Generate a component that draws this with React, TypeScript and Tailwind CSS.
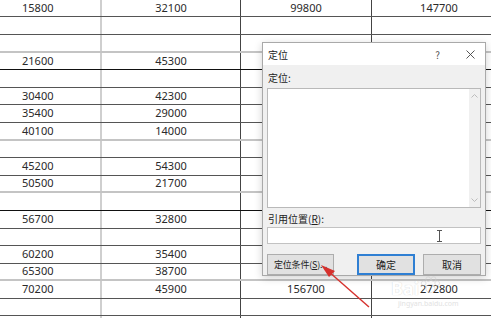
import React from 'react';

type Row = { h: string; line: string; cells: string[] };

const rows: Row[] = [
  { h: 'h-[17px]', line: 'border-b border-[#555]', cells: ['15800', '32100', '99800', '147700'] },
  { h: 'h-[18px]', line: 'border-b border-[#555]', cells: [] },
  { h: 'h-[18px]', line: 'border-b-2 border-[#c4c4c4]', cells: [] },
  { h: 'h-[17px]', line: 'border-b border-[#111]', cells: ['21600', '45300'] },
  { h: 'h-[18px]', line: 'border-b border-[#555]', cells: [] },
  { h: 'h-[17px]', line: 'border-b border-[#555]', cells: ['30400', '42300'] },
  { h: 'h-[18px]', line: 'border-b border-[#555]', cells: ['35400', '29000'] },
  { h: 'h-[18px]', line: 'border-b-2 border-[#c4c4c4]', cells: ['40100', '14000'] },
  { h: 'h-[17px]', line: 'border-b border-[#555]', cells: [] },
  { h: 'h-[18px]', line: 'border-b border-[#555]', cells: ['45200', '54300'] },
  { h: 'h-[17px]', line: 'border-b-2 border-[#c4c4c4]', cells: ['50500', '21700'] },
  { h: 'h-[18px]', line: 'border-b border-[#111]', cells: [] },
  { h: 'h-[18px]', line: 'border-b border-[#555]', cells: ['56700', '32800'] },
  { h: 'h-[17px]', line: 'border-b border-[#555]', cells: [] },
  { h: 'h-[18px]', line: 'border-b border-[#555]', cells: ['60200', '35400'] },
  { h: 'h-[17px]', line: 'border-b-2 border-[#c4c4c4]', cells: ['65300', '38700'] },
  { h: 'h-[18px]', line: 'border-b border-[#555]', cells: ['70200', '45900', '156700', '272800'] },
  { h: 'h-[17px]', line: 'border-b border-[#555]', cells: [] },
  { h: 'h-[18px]', line: 'border-b border-[#555]', cells: [] },
];

function Sheet() {
  return (
    <div className="flex flex-col text-[11px] text-[#2a2a2a]">
      {rows.map((r, i) => (
        <div key={i} className={`flex ${r.h} ${r.line}`}>
          <div className="w-[102px] shrink-0 flex items-center pl-[22px] border-r-2 border-[#cfcfcf]">{r.cells[0]}</div>
          <div className="w-[139px] shrink-0 flex items-center justify-center border-r border-[#444]">{r.cells[1]}</div>
          <div className="w-[131px] shrink-0 flex items-center justify-center border-r border-[#444]">{r.cells[2]}</div>
          <div className="w-[134px] shrink-0 flex items-center justify-center">{r.cells[3]}</div>
        </div>
      ))}
    </div>
  );
}

function GotoDialog() {
  const cjk = "font-['Microsoft_YaHei','Noto_Sans_CJK_SC',sans-serif]";
  return (
    <div className={`absolute left-[262px] top-[42px] w-[224px] h-[234px] flex flex-col border border-[#a9a9a9] bg-[#f0f0f0] shadow-[0_2px_8px_rgba(0,0,0,0.18)] text-[10px] text-[#222] ${cjk}`}>
      <div className="h-[23px] flex items-center bg-white pl-[5px] pr-[10px]">
        <span className="flex-1">定位</span>
        <span className="text-[#555] mr-[26px] text-[10px]">?</span>
        <svg width="9" height="9" viewBox="0 0 9 9">
          <path d="M0.5 0.5 L8.5 8.5 M8.5 0.5 L0.5 8.5" stroke="#444" strokeWidth="0.9" />
        </svg>
      </div>
      <div className="flex-1 flex flex-col px-[4px] pt-[4px]">
        <div className="h-[17px] flex items-center pl-[1px]">定位:</div>
        <div className="mt-[2px] h-[120px] flex border border-[#b9b9b9] bg-white">
          <div className="flex-1" />
          <div className="w-[11px] bg-[#f0f0f0] flex flex-col items-center justify-between py-[5px]">
            <svg width="7" height="4" viewBox="0 0 7 4">
              <path d="M0.5 3.5 L3.5 0.5 L6.5 3.5" fill="none" stroke="#bcbcbc" strokeWidth="1" />
            </svg>
            <svg width="7" height="4" viewBox="0 0 7 4">
              <path d="M0.5 0.5 L3.5 3.5 L6.5 0.5" fill="none" stroke="#bcbcbc" strokeWidth="1" />
            </svg>
          </div>
        </div>
        <div className="h-[18px] mt-[1px] flex items-center pl-[1px]">
          引用位置(<span className="underline">R</span>):
        </div>
        <div className="h-[17px] flex items-center justify-end pr-[37px] border border-[#c2c2c2] bg-white">
          <svg width="7" height="12" viewBox="0 0 7 12">
            <path d="M1 0.5 H6 M1 11.5 H6 M3.5 0.5 V11.5" stroke="#555" strokeWidth="1" />
          </svg>
        </div>
        <div className="mt-[10px] flex items-center">
          <button className="w-[67px] h-[21px] p-0 flex items-center justify-center whitespace-nowrap border border-[#adadad] bg-[#e1e1e1] text-[9px] tracking-[-0.2px] text-[#222]">
            定位条件(<span className="underline">S</span>)...
          </button>
          <button className="ml-[23px] w-[58px] h-[21px] border border-[#2f7fd3] shadow-[inset_0_0_0_1px_#2f7fd3] bg-[#e1e1e1] text-[10px] text-[#222]">
            确定
          </button>
          <button className="ml-[8px] w-[58px] h-[21px] border border-[#adadad] bg-[#e1e1e1] text-[10px] text-[#222]">
            取消
          </button>
        </div>
      </div>
    </div>
  );
}

export default function App() {
  return (
    <div className="relative w-[491px] h-[318px] overflow-hidden bg-white font-['Noto_Sans',sans-serif]">
      <Sheet />
      <GotoDialog />

      {/* watermark */}
      <div className="absolute left-[391px] top-[279px] flex items-start pointer-events-none opacity-80">
        <span className="text-[18px] leading-[18px] font-bold text-white [text-shadow:0_0_1px_#bdbdbd]">Bai</span>
        <svg width="20" height="18" viewBox="0 0 22 20" className="ml-[1px] -mt-[3px]">
          <g fill="none" stroke="#d0d0d0" strokeWidth="0.8">
            <circle cx="4" cy="8" r="2.6" />
            <circle cx="9" cy="3.5" r="2.6" />
            <circle cx="15" cy="3.5" r="2.6" />
            <circle cx="19" cy="8" r="2.6" />
            <ellipse cx="11.5" cy="14" rx="5" ry="4.5" />
          </g>
        </svg>
      </div>
      <div className="absolute left-[398px] top-[300px] text-[7px] leading-[8px] text-[#e2e2e2] pointer-events-none">jingyan.baidu.com</div>

      {/* red arrow */}
      <svg className="absolute left-0 top-0 pointer-events-none" width="491" height="318">
        <line x1="369" y1="307" x2="328" y2="271" stroke="#d6312d" strokeWidth="1.4" />
        <polygon points="321,265 335,271 329,277" fill="#d6312d" />
      </svg>
    </div>
  );
}
